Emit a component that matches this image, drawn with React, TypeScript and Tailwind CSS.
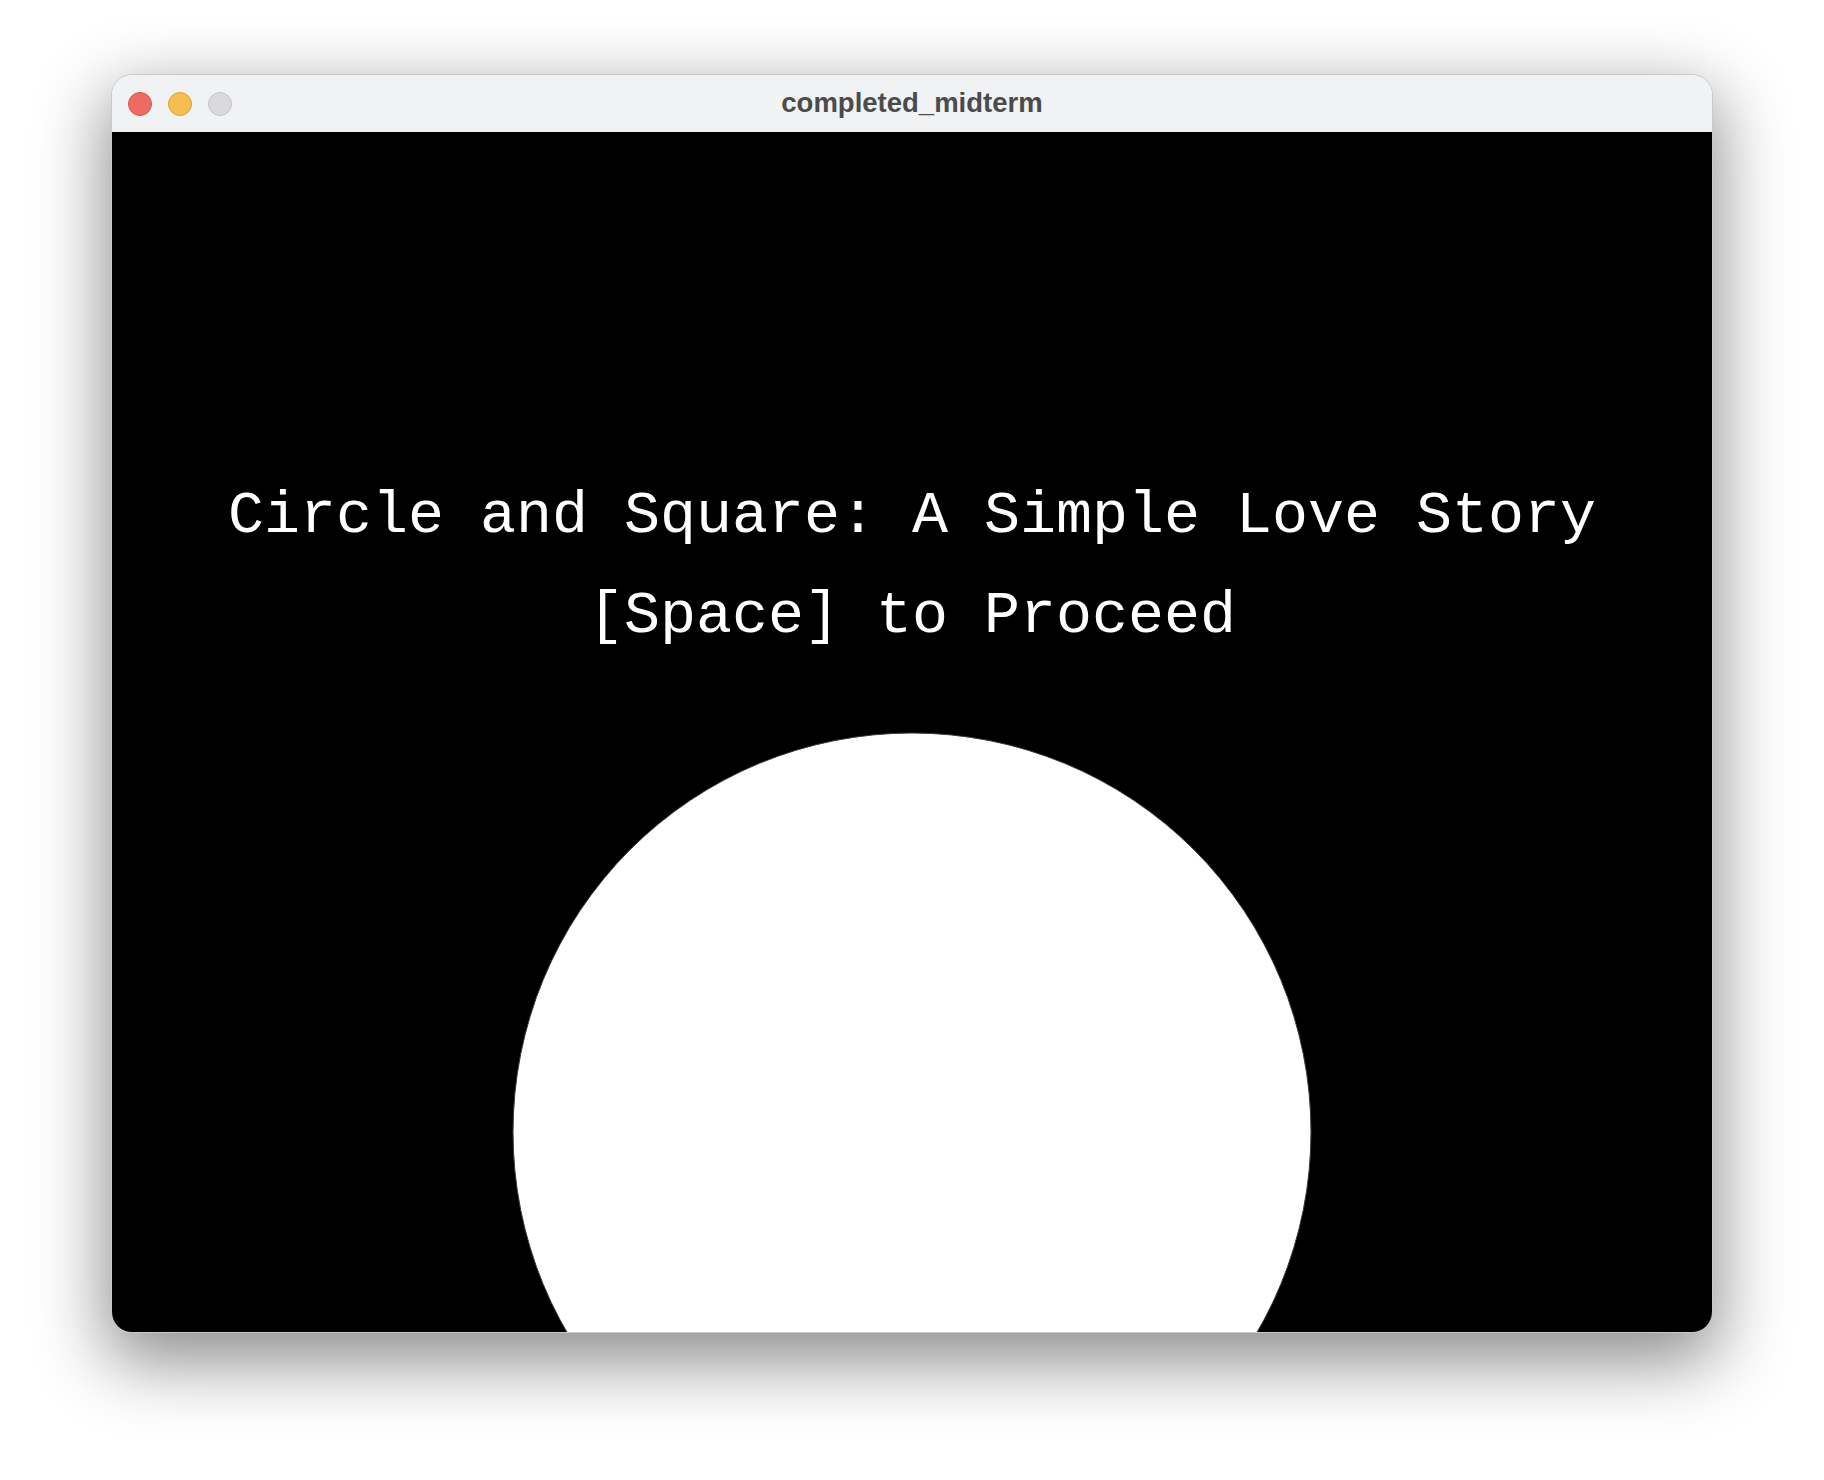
import React from "react";

export default function App() {
  return (
    <div className="w-[1824px] h-[1480px] bg-white flex justify-center pt-[75px]">
      <div className="w-[1600px] h-[1257px] rounded-[20px] overflow-hidden flex flex-col shadow-[0_24px_70px_6px_rgba(0,0,0,0.45)] ring-1 ring-[#c9c9c9]">
        <div className="h-[57px] bg-[#f1f2f4] relative flex items-center justify-center shrink-0">
          <div className="absolute left-[16px] top-[17px] flex gap-[16px]">
            <div className="w-[24px] h-[24px] rounded-full bg-[#ee6b60] border border-[#d6564b]" />
            <div className="w-[24px] h-[24px] rounded-full bg-[#f6be4f] border border-[#d9a13a]" />
            <div className="w-[24px] h-[24px] rounded-full bg-[#dadadc] border border-[#c4c4c6]" />
          </div>
          <span
            className="text-[27.5px] font-bold text-[#4b4b4b] leading-none -mt-[2px]"
            style={{ fontFamily: '"Liberation Sans", Arial, sans-serif' }}
          >
            completed_midterm
          </span>
        </div>
        <div className="relative bg-black h-[1200px] overflow-hidden flex flex-col items-center pt-[334px]">
          <svg
            className="absolute left-0 top-0"
            width="1600"
            height="1200"
            viewBox="0 0 1600 1200"
          >
            <circle cx="800" cy="1000" r="399" fill="#ffffff" stroke="#3a3a3a" strokeWidth="1" />
          </svg>
          <div
            className="relative text-white text-[60px] leading-[100px] text-center whitespace-pre"
            style={{ fontFamily: '"Courier New", "Nimbus Mono PS", "Nimbus Mono L", FreeMono, "Courier 10 Pitch", Courier, "Liberation Mono", monospace' }}
          >
            <div>Circle and Square: A Simple Love Story</div>
            <div>[Space] to Proceed</div>
          </div>
        </div>
      </div>
    </div>
  );
}
